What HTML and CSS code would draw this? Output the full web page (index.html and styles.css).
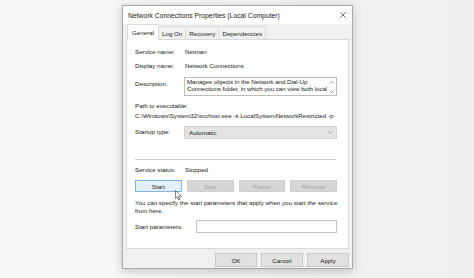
FILE: index.html
```html
<!DOCTYPE html>
<html lang="en">
<head>
    <meta charset="UTF-8">
    <meta name="viewport" content="width=device-width, initial-scale=1">
    <title>Network Connections Properties (Local Computer)</title>
    <link rel="stylesheet" href="styles.css">
</head>
<body>
    <div class="window">
        <div class="titlebar">
            <span>Network Connections Properties (Local Computer)</span>
            <svg class="close" width="6" height="6" viewBox="0 0 6 6">
                <path d="M0.3 0.3L5.7 5.7M5.7 0.3L0.3 5.7" stroke="#555" stroke-width="0.8" fill="none"/>
            </svg>
        </div>

        <div class="tabs">
            <div class="tab tab--active">General</div>
            <div class="tab">Log On</div>
            <div class="tab">Recovery</div>
            <div class="tab">Dependencies</div>
        </div>

        <div class="page">
            <div class="row row--first">
                <span class="label">Service name:</span>
                <span>Netman</span>
            </div>
            <div class="row row--gap">
                <span class="label">Display name:</span>
                <span>Network Connections</span>
            </div>
            <div class="row row--desc">
                <span class="label">Description:</span>
                <div class="desc">
                    <div class="desc__text">Manages objects in the Network and Dial-Up<br>Connections folder, in which you can view both local<br>area network and remote connections.</div>
                    <div class="desc__scroll">
                        <svg width="5" height="3" viewBox="0 0 5 3"><path d="M0.5 2.5L2.5 0.5L4.5 2.5" stroke="#777" stroke-width="0.7" fill="none"/></svg>
                        <svg width="5" height="3" viewBox="0 0 5 3"><path d="M0.5 0.5L2.5 2.5L4.5 0.5" stroke="#777" stroke-width="0.7" fill="none"/></svg>
                    </div>
                </div>
            </div>
            <div class="row row--path">Path to executable:</div>
            <div class="row">C:\Windows\System32\svchost.exe -k LocalSystemNetworkRestricted -p</div>
            <div class="row row--select">
                <span class="label">Startup type:</span>
                <div class="select">
                    <span>Automatic</span>
                    <svg width="5" height="3" viewBox="0 0 5 3"><path d="M0.5 0.5L2.5 2.5L4.5 0.5" stroke="#888" stroke-width="0.7" fill="none"/></svg>
                </div>
            </div>

            <div class="separator"></div>

            <div class="row row--status">
                <span class="label">Service status:</span>
                <span>Stopped</span>
            </div>
            <div class="controls">
                <button class="btn btn--focus">Start</button>
                <button class="btn" disabled>Stop</button>
                <button class="btn" disabled>Pause</button>
                <button class="btn" disabled>Resume</button>
                <svg class="pointer" width="7" height="11" viewBox="0 0 7 11">
                    <path d="M0.4 0.4L0.4 8.6L2.3 6.8L3.7 9.9L4.9 9.4L3.6 6.3L6.3 6.3Z" fill="#fff" stroke="#222" stroke-width="0.6"/>
                </svg>
            </div>
            <p class="help">You can specify the start parameters that apply when you start the service<br>from here.</p>
            <div class="row row--params">
                <span class="label label--wide">Start parameters:</span>
                <div class="input"></div>
            </div>
        </div>

        <div class="actions">
            <button class="btn">OK</button>
            <button class="btn">Cancel</button>
            <button class="btn">Apply</button>
        </div>
    </div>
</body>
</html>
```

FILE: styles.css
```css
body {
    margin: 0;
    padding: 5px 0 0 122px;
    height: 278px;
    box-sizing: border-box;
    background: linear-gradient(to right, #f8f8f8, #f6f6f6 30%, #efefef);
    font-family: "Liberation Sans", Arial, sans-serif;
    font-size: 6.2px;
    color: #222;
    overflow: hidden;
}

.window {
    width: 231px;
    height: 264px;
    box-sizing: border-box;
    border: 1px solid #a9a9a9;
    background: #f0f0f0;
    box-shadow: 0 2px 9px rgba(0, 0, 0, 0.22);
    display: flex;
    flex-direction: column;
}

.titlebar {
    height: 18px;
    flex: none;
    background: #fff;
    display: flex;
    align-items: center;
    justify-content: space-between;
    padding: 0 6px 0 5px;
    font-size: 6.8px;
    color: #1a1a1a;
}

.tabs {
    height: 15px;
    flex: none;
    display: flex;
    align-items: flex-end;
    padding-left: 4px;
}

.tab {
    height: 13px;
    line-height: 13px;
    padding: 0 3px;
    border: 1px solid #dcdcdc;
    border-bottom: none;
    margin-right: -1px;
    box-sizing: border-box;
}

.tab--active {
    height: 16px;
    line-height: 15px;
    padding: 0 4px;
    background: #fff;
    margin-bottom: -1px;
    position: relative;
    z-index: 1;
}

.page {
    height: 210px;
    flex: none;
    box-sizing: border-box;
    margin: 0 3px;
    border: 1px solid #d9d9d9;
    background: #fff;
    padding: 7px 11px 0 8px;
    display: flex;
    flex-direction: column;
}

.row {
    display: flex;
    height: 10px;
    line-height: 10px;
    white-space: nowrap;
}

.label {
    width: 50px;
    flex: none;
}

.label--wide {
    width: 61px;
}

.row--gap {
    margin-top: 4px;
}

.row--desc {
    margin-top: 6px;
    height: 19px;
    align-items: flex-start;
}

.row--desc .label {
    padding-top: 2px;
}

.desc {
    width: 154px;
    height: 19px;
    box-sizing: border-box;
    margin-left: -1px;
    border: 1px solid #bdbdbd;
    display: flex;
    overflow: hidden;
}

.desc__text {
    flex: 1;
    padding: 0 1px 0 2px;
    line-height: 7.4px;
    overflow: hidden;
    letter-spacing: -0.05px;
}

.desc__scroll {
    width: 9px;
    display: flex;
    flex-direction: column;
    align-items: center;
    gap: 6px;
    padding-top: 3px;
}

.desc__scroll svg {
    display: block;
}

.row--path {
    margin-top: 5px;
}

.row--select {
    margin-top: 5px;
    height: 13px;
    line-height: 11px;
}

.select {
    width: 154px;
    height: 13px;
    box-sizing: border-box;
    margin-left: -1px;
    border: 1px solid #d2d2d2;
    background: #e4e4e4;
    display: flex;
    align-items: center;
    justify-content: space-between;
    padding: 0 3px 0 4px;
}

.separator {
    margin-top: 20px;
    height: 1px;
    width: 201px;
    background: #cdcdcd;
}

.row--status {
    margin-top: 5px;
}

.controls {
    margin-top: 5px;
    height: 12px;
    display: grid;
    grid-template-columns: repeat(4, 1fr);
    gap: 5px;
    position: relative;
}

.btn {
    font-family: "Liberation Sans", Arial, sans-serif;
    font-size: 6.2px;
    color: #222;
    padding: 0;
    margin: 0;
    border: 1px solid #cbcbcb;
    background: #e1e1e1;
    box-sizing: border-box;
    border-radius: 0;
}

.btn:disabled {
    background: #d6d6d6;
    border-color: #cfcfcf;
    color: #a3a3a3;
}

.btn--focus {
    background: #e3effa;
    border-color: #7fb4e4;
}

.pointer {
    position: absolute;
    left: 40px;
    top: 10px;
}

.help {
    margin: 7px 0 0;
    line-height: 8px;
    white-space: nowrap;
}

.row--params {
    margin-top: 5px;
    height: 13px;
    line-height: 13px;
}

.input {
    flex: 1;
    height: 13px;
    box-sizing: border-box;
    border: 1px solid #c3c3c3;
}

.actions {
    height: 19px;
    flex: none;
    box-sizing: border-box;
    display: flex;
    justify-content: flex-end;
    gap: 4px;
    padding: 4px 3px 0 0;
}

.actions .btn {
    width: 42px;
    height: 14px;
}
```
